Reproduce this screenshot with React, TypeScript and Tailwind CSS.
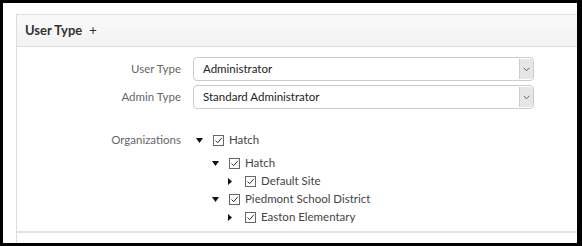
import React from "react";

const Caret = ({ open }: { open: boolean }) =>
  open ? (
    <svg width="7" height="5" viewBox="0 0 7 5" className="shrink-0">
      <path d="M0 0 L7 0 L3.5 5 Z" fill="#111" />
    </svg>
  ) : (
    <svg width="4" height="7" viewBox="0 0 4 7" className="shrink-0">
      <path d="M0 0 L4 3.5 L0 7 Z" fill="#111" />
    </svg>
  );

const Check = () => (
  <span className="flex h-[11px] w-[11px] shrink-0 items-center justify-center border border-[#666] bg-white">
    <svg width="9" height="9" viewBox="0 0 9 9">
      <path d="M1.5 4.5 L3.7 6.7 L7.8 1.8" fill="none" stroke="#333" strokeWidth="1" />
    </svg>
  </span>
);

const Node = ({ level, open, label, className = "" }: { level: number; open: boolean; label: string; className?: string }) => (
  <div className={"flex h-[18px] items-center " + className} style={{ paddingLeft: level * 16 }}>
    <span className="flex w-[17px] items-center justify-start">
      <Caret open={open} />
    </span>
    <Check />
    <span className="ml-[5px] text-[#444]">{label}</span>
  </div>
);

const Select = ({ value }: { value: string }) => (
  <div className="flex h-[24px] w-[341px] items-stretch rounded-[4px] border border-[#ccc] bg-white">
    <div className="flex flex-1 items-center pl-[9px] text-[#222]">{value}</div>
    <div className="my-[1px] flex w-[14px] items-center justify-center rounded-r-[3px] border-l border-[#ccc] bg-[#e6e6e6]">
      <svg width="7" height="5" viewBox="0 0 7 5">
        <path d="M0.7 0.8 L3.5 3.8 L6.3 0.8" fill="none" stroke="#666" strokeWidth="1" />
      </svg>
    </div>
  </div>
);

export default function App() {
  return (
    <div
      className="h-[246px] w-[582px] overflow-hidden border-b-[3px] border-l-[3px] border-r-[5px] border-t-[3px] border-black bg-white text-[11.5px]"
      style={{ fontFamily: "Lato, 'Liberation Sans', sans-serif" }}
    >
      <div className="ml-[13px] mt-[11px] h-[300px] border-l border-t border-[#ddd]">
        <div className="flex h-[32px] items-center border-b border-[#ddd] bg-gradient-to-b from-[#fafafa] to-[#f3f3f3] pl-[8px]">
          <span className="text-[13px] font-bold text-[#333]">User Type</span>
          <span className="ml-[7px] text-[13px] text-[#333]">+</span>
        </div>
        <div className="pt-[10px]">
          <div className="flex items-center">
            <div className="w-[176px] pr-[12px] text-right text-[#666]">User Type</div>
            <Select value="Administrator" />
          </div>
          <div className="mt-[4px] flex items-center">
            <div className="w-[176px] pr-[12px] text-right text-[#666]">Admin Type</div>
            <Select value="Standard Administrator" />
          </div>
          <div className="mt-[22px] flex items-start">
            <div className="flex h-[18px] w-[176px] items-center justify-end pr-[12px] text-[#666]">Organizations</div>
            <div className="pl-[3px]">
              <Node level={0} open label="Hatch" />
              <Node level={1} open label="Hatch" className="mt-[5px]" />
              <Node level={2} open={false} label="Default Site" />
              <Node level={1} open label="Piedmont School District" />
              <Node level={2} open={false} label="Easton Elementary" />
            </div>
          </div>
          <div className="mt-[5px] border-t-2 border-[#e3e3e3]" />
        </div>
      </div>
    </div>
  );
}
